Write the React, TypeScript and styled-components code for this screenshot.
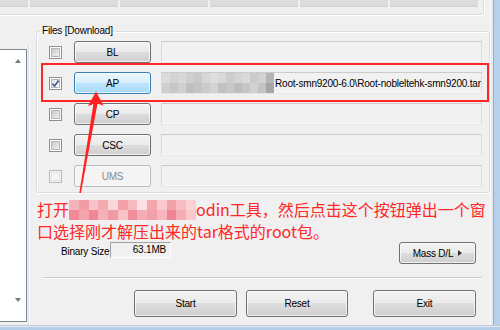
import React from "react";
import styled, { createGlobalStyle } from "styled-components";

const GlobalStyle = createGlobalStyle`
    html, body {
        margin: 0;
        padding: 0;
        background: #f0f0f0;
    }
    body {
        font-family: "Liberation Sans", Arial, sans-serif;
    }
`;

const Window = styled.div`
    position: relative;
    width: 500px;
    height: 330px;
    overflow: hidden;
    display: flex;
    flex-direction: column;
    background: #f0f0f0;
    font-family: "Liberation Sans", Arial, sans-serif;
    font-size: 10px;
    letter-spacing: -0.2px;
    color: #000;
`;

const FrameRow = styled.div`
    display: flex;
    height: 325px;
`;

const Main = styled.div`
    width: 490px;
    display: flex;
    flex-direction: column;
`;

const Edge = styled.div`
    flex: 1;
    background: linear-gradient(
        to right,
        #fbfbfb 0 1px,
        #e6ebf0 1px 3px,
        #8db0d6 3px 4px,
        #b7d0eb 4px 100%
    );
`;

const BottomBand = styled.div`
    flex: 1;
    background: linear-gradient(#c4c8cd 0 1px, #e2eaf3 1px 2px, #b5cfea 2px 100%);
`;

const TopGroup = styled.div`
    box-sizing: border-box;
    width: 484px;
    height: 15px;
    display: flex;
    align-items: flex-start;
    gap: 2px;
    border-right: 1px solid #d5dfe5;
    border-bottom: 1px solid #d5dfe5;
    border-bottom-right-radius: 3px;
    box-shadow: 1px 1px 0 #fff;
`;

const StatusBox = styled.div<{ $w: number }>`
    box-sizing: border-box;
    width: ${(p) => p.$w}px;
    height: 7px;
    background: #dcdcdc;
    border-bottom: 1px solid #d0d0d0;
`;

const Body = styled.div`
    flex: 1;
    display: flex;
`;

const LeftCol = styled.div`
    width: 30px;
    padding-top: 27px;
    display: flex;
`;

const LeftGroup = styled.div`
    width: 29px;
    box-sizing: border-box;
    padding: 7px 0 3px;
    border-right: 1px solid #d5dfe5;
    border-top-right-radius: 3px;
    box-shadow: 1px 0 0 #fff;
    display: flex;
`;

const ListBox = styled.div`
    box-sizing: border-box;
    width: 27px;
    background: #fff;
    border: 1px solid #828790;
    border-left: none;
    display: flex;
    justify-content: flex-end;
`;

const ScrollBar = styled.div`
    width: 17px;
    padding: 9px 0 19px;
    display: flex;
    flex-direction: column;
    justify-content: space-between;
    align-items: center;
`;

const ScrollArrow = styled.span<{ $down?: boolean }>`
    width: 0;
    height: 0;
    border-left: 3.5px solid transparent;
    border-right: 3.5px solid transparent;
    ${(p) =>
        p.$down
            ? "border-top: 4px solid #7a7a7a;"
            : "border-bottom: 4px solid #7a7a7a;"}
`;

const RightCol = styled.div`
    flex: 1;
    min-width: 0;
    padding-left: 6px;
    display: flex;
    flex-direction: column;
`;

const FilesGroup = styled.fieldset`
    margin: 10px 0 0;
    padding: 4px 7px 5px 3px;
    min-width: 0;
    border: 1px solid #d5dfe5;
    border-radius: 3px;
    box-shadow: inset 1px 1px 0 #fff, 1px 1px 0 #fff;
    display: flex;
    flex-direction: column;
    gap: 9px;
`;

const Legend = styled.legend`
    padding: 0 2px;
    margin: 0;
    font-size: 10px;
    line-height: 12px;
    color: #000;
`;

const FileRow = styled.div`
    height: 22px;
    padding-left: 9px;
    display: flex;
    align-items: center;
`;

const CheckBox = styled.span<{ $checked?: boolean; $disabled?: boolean }>`
    position: relative;
    box-sizing: border-box;
    width: 13px;
    height: 13px;
    margin-right: 12px;
    flex-shrink: 0;
    border: 1px solid ${(p) => (p.$disabled ? "#b8b8b8" : "#8e8f8f")};
    background: ${(p) => (p.$disabled ? "#f4f4f4" : "#fff")};
    display: flex;
    align-items: center;
    justify-content: center;

    &::after {
        content: "";
        position: absolute;
        inset: 1px;
        box-sizing: border-box;
        border: 1px solid ${(p) => (p.$disabled ? "#e2e2e2" : "#b3b7bc")};
        background: ${(p) =>
            p.$disabled
                ? "#f4f4f4"
                : p.$checked
                ? "linear-gradient(135deg, #e3e3e3, #fbfbfb)"
                : "linear-gradient(135deg, #c9c9c9, #f2f2f2)"};
    }

    svg {
        position: relative;
        z-index: 1;
    }
`;

const WinButton = styled.button<{
    $w: number;
    $h?: number;
    $ml?: number;
    $mr?: number;
    $variant?: "normal" | "focus" | "disabled";
}>`
    box-sizing: border-box;
    width: ${(p) => p.$w}px;
    height: ${(p) => p.$h ?? 22}px;
    margin: 0 ${(p) => p.$mr ?? 0}px 0 ${(p) => p.$ml ?? 0}px;
    padding: 0;
    flex-shrink: 0;
    border-radius: 3px;
    font-family: "Liberation Sans", Arial, sans-serif;
    font-size: 10px;
    letter-spacing: -0.2px;
    display: flex;
    align-items: center;
    justify-content: center;
    gap: 3px;
    border: 1px solid
        ${(p) =>
            p.$variant === "focus"
                ? "#3c7fb1"
                : p.$variant === "disabled"
                ? "#b8bcbf"
                : "#707070"};
    color: ${(p) => (p.$variant === "disabled" ? "#8a8a8a" : "#000")};
    background: ${(p) =>
        p.$variant === "focus"
            ? "linear-gradient(#eaf6fd 0%, #d9f0fc 50%, #bee6fd 50%, #a7d9f5 100%)"
            : p.$variant === "disabled"
            ? "#f4f4f4"
            : "linear-gradient(#f2f2f2 0%, #ebebeb 50%, #dddddd 50%, #cfcfcf 100%)"};
    box-shadow: inset 0 0 0 1px
        ${(p) =>
            p.$variant === "disabled"
                ? "rgba(255,255,255,0.4)"
                : "rgba(255,255,255,0.7)"};
`;

const PathField = styled.div`
    flex: 1;
    min-width: 0;
    height: 22px;
    box-sizing: border-box;
    margin-left: 10px;
    border: 1px solid;
    border-color: #cbcbcb #dedede #e6e6e6 #dadada;
    box-shadow: inset 0 -1px 0 #fafafa;
    background: #f1f1f1;
    display: flex;
    align-items: center;
    overflow: hidden;
    white-space: nowrap;
`;

const PathText = styled.span`
    margin-left: 1px;
    color: #000;
`;

const Mosaic = styled.span<{ $cols: number; $w: number; $rowH: number }>`
    display: inline-grid;
    flex-shrink: 0;
    width: ${(p) => p.$w}px;
    grid-template-columns: repeat(${(p) => p.$cols}, 1fr);
    grid-auto-rows: ${(p) => p.$rowH}px;
`;

const InlineMosaic = styled(Mosaic)`
    vertical-align: top;
    margin-top: 2px;
`;

const Cell = styled.span<{ $c: string }>`
    background: ${(p) => p.$c};
`;

const RedNote = styled.div`
    margin-top: 5px;
    padding-left: 1px;
    font-family: "Noto Sans CJK SC", "Noto Sans", sans-serif;
    font-size: 16px;
    line-height: 22px;
    letter-spacing: 0;
    color: #ff2727;
    white-space: nowrap;
`;

const NoteLine = styled.div`
    height: 22px;
`;

const BinaryRow = styled.div`
    height: 22px;
    padding: 0 14px 0 25px;
    display: flex;
    align-items: flex-start;
`;

const SizeLabel = styled.span`
    width: 44px;
    margin: 2px 5px 0 0;
    line-height: 16px;
    white-space: nowrap;
`;

const SizeBox = styled.div`
    box-sizing: border-box;
    width: 61px;
    height: 16px;
    padding-right: 4px;
    border: 1px solid;
    border-color: #a0a0a0 #fff #fff #a0a0a0;
    line-height: 14px;
    text-align: right;
`;

const Spacer = styled.div`
    flex: 1;
`;

const PlayMark = styled.span`
    width: 0;
    height: 0;
    border-top: 3px solid transparent;
    border-bottom: 3px solid transparent;
    border-left: 4px solid #333;
    margin-left: 2px;
`;

const Separator = styled.div`
    margin: 13px 8px 0 7px;
    border-top: 1px solid #c9c9c9;
    border-bottom: 1px solid #fff;
`;

const ActionRow = styled.div`
    margin-top: 11px;
    padding-left: 98px;
    display: flex;
`;

const RedFrame = styled.div`
    position: absolute;
    left: 41px;
    top: 63px;
    width: 448px;
    height: 39px;
    box-sizing: border-box;
    border: 2px solid #ff2626;
    pointer-events: none;
`;

const ArrowSvg = styled.svg`
    position: absolute;
    left: 76px;
    top: 88px;
    pointer-events: none;
`;

const apBlur = [
    "#dcdcdc", "#d3d3d3", "#d8d8d8", "#cfcfcf", "#c9c9c9", "#d6d6d6", "#dedede",
    "#d9d9d9", "#cdcdcd", "#d4d4d4", "#dadada", "#cbcbcb", "#d2d2d2", "#b5b5b5",
    "#cfcfcf", "#c7c7c7", "#d0d0d0", "#bfbfbf", "#c4c4c4", "#cbcbcb", "#d3d3d3",
    "#c2c2c2", "#c8c8c8", "#bdbdbd", "#c6c6c6", "#d1d1d1", "#c3c3c3", "#a6a6a6",
];

const noteBlur = [
    "#f6b3ba", "#f29ca6", "#f8c3c8", "#f5aab2", "#fbd6d9", "#f3a0a9", "#f7b9bf",
    "#fce0e3", "#f4a6ae", "#f9c9ce", "#f2a2ab", "#f7bcc2", "#fad0d5",
    "#f08c97", "#f4a4ad", "#ef8794", "#f6b0b7", "#f29aa4", "#f8c1c7", "#f08f9a",
    "#f5acb4", "#f3a0a9", "#f7b6bd", "#ee8592", "#f5adb5", "#f9c7cc",
];

const statusBoxes = [28, 88, 88, 88, 88, 88];

type FileSlot = {
    id: string;
    checked?: boolean;
    disabled?: boolean;
    focus?: boolean;
};

const slots: FileSlot[] = [
    { id: "BL" },
    { id: "AP", checked: true, focus: true },
    { id: "CP" },
    { id: "CSC" },
    { id: "UMS", disabled: true },
];

const Check = () => (
    <svg width="9" height="9" viewBox="0 0 9 9">
        <path
            d="M1.5 4.8 L3.6 7 L7.6 1.6"
            fill="none"
            stroke="#3a5590"
            strokeWidth="1.6"
        />
    </svg>
);

export default function App() {
    return (
        <>
            <GlobalStyle />
            <Window>
                <FrameRow>
                    <Main>
                        <TopGroup>
                            {statusBoxes.map((w, i) => (
                                <StatusBox key={i} $w={w} />
                            ))}
                        </TopGroup>
                        <Body>
                            <LeftCol>
                                <LeftGroup>
                                    <ListBox>
                                        <ScrollBar>
                                            <ScrollArrow />
                                            <ScrollArrow $down />
                                        </ScrollBar>
                                    </ListBox>
                                </LeftGroup>
                            </LeftCol>
                            <RightCol>
                                <FilesGroup>
                                    <Legend>Files [Download]</Legend>
                                    {slots.map((s) => (
                                        <FileRow key={s.id}>
                                            <CheckBox
                                                $checked={s.checked}
                                                $disabled={s.disabled}
                                            >
                                                {s.checked && <Check />}
                                            </CheckBox>
                                            <WinButton
                                                $w={77}
                                                $variant={
                                                    s.focus
                                                        ? "focus"
                                                        : s.disabled
                                                        ? "disabled"
                                                        : "normal"
                                                }
                                            >
                                                {s.id}
                                            </WinButton>
                                            <PathField>
                                                {s.id === "AP" && (
                                                    <>
                                                        <Mosaic
                                                            $cols={14}
                                                            $w={112}
                                                            $rowH={10}
                                                        >
                                                            {apBlur.map((c, i) => (
                                                                <Cell key={i} $c={c} />
                                                            ))}
                                                        </Mosaic>
                                                        <PathText>
                                                            Root-smn9200-6.0\Root-nobleltehk-smn9200.tar
                                                        </PathText>
                                                    </>
                                                )}
                                            </PathField>
                                        </FileRow>
                                    ))}
                                </FilesGroup>

                                <RedNote>
                                    <NoteLine>
                                        打开
                                        <InlineMosaic $cols={13} $w={127} $rowH={10}>
                                            {noteBlur.map((c, i) => (
                                                <Cell key={i} $c={c} />
                                            ))}
                                        </InlineMosaic>
                                        odin工具，然后点击这个按钮弹出一个窗
                                    </NoteLine>
                                    <NoteLine>口选择刚才解压出来的tar格式的root包。</NoteLine>
                                </RedNote>

                                <BinaryRow>
                                    <SizeLabel>Binary Size</SizeLabel>
                                    <SizeBox>63.1MB</SizeBox>
                                    <Spacer />
                                    <WinButton $w={77}>
                                        Mass D/L
                                        <PlayMark />
                                    </WinButton>
                                </BinaryRow>

                                <Separator />

                                <ActionRow>
                                    <WinButton $w={103} $h={27}>
                                        Start
                                    </WinButton>
                                    <WinButton $w={102} $h={27} $ml={9}>
                                        Reset
                                    </WinButton>
                                    <WinButton $w={103} $h={27} $ml={25}>
                                        Exit
                                    </WinButton>
                                </ActionRow>
                            </RightCol>
                        </Body>
                    </Main>
                    <Edge />
                </FrameRow>
                <BottomBand />

                <RedFrame />
                <ArrowSvg width="32" height="110" viewBox="0 0 32 110">
                    <polygon points="17.6,15 21.6,15 4.9,105 3.3,105" fill="#ff2222" />
                    <polygon points="20,3.5 27.5,17.5 20,15.2 12,18" fill="#ff2222" />
                </ArrowSvg>
            </Window>
        </>
    );
}
